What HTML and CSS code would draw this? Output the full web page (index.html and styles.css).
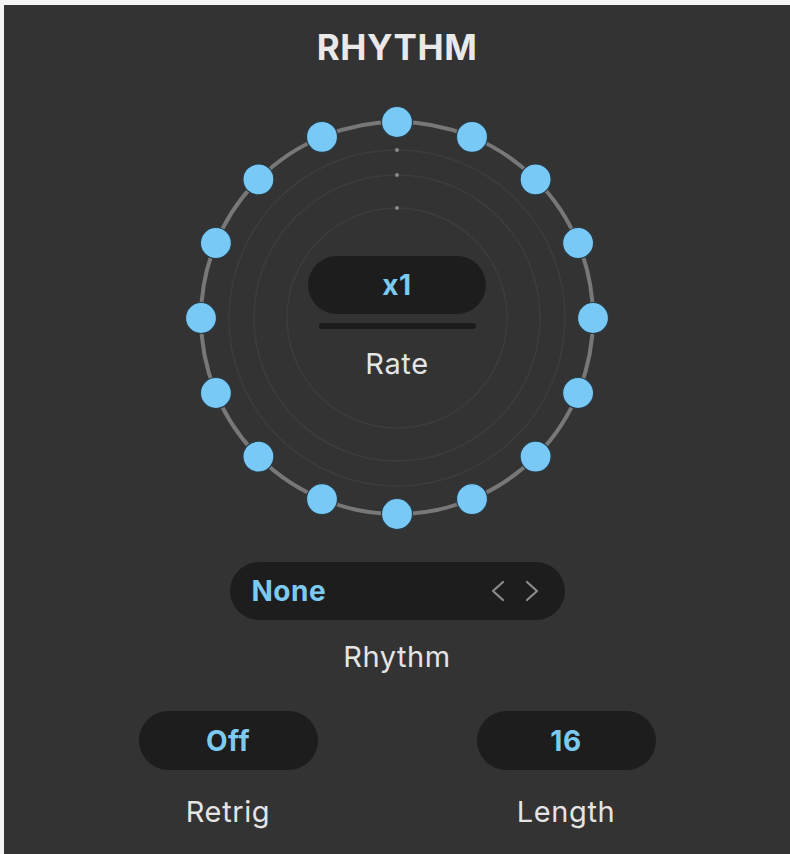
FILE: index.html
```html
<!DOCTYPE html>
<html>
<head>
<meta charset="utf-8">
<link rel="stylesheet" href="styles.css">
</head>
<body>
<div class="panel">
  <h1 class="title">RHYTHM</h1>
  <div class="dial">
    <svg class="dial-svg" width="440" height="440" viewBox="0 0 440 440">
      <circle cx="220" cy="220" r="168" fill="none" stroke="#3d3d3d" stroke-width="1.5"/>
      <circle cx="220" cy="220" r="143" fill="none" stroke="#3d3d3d" stroke-width="1.5"/>
      <circle cx="220" cy="220" r="110" fill="none" stroke="#3d3d3d" stroke-width="1.5"/>
      <circle cx="220" cy="52" r="2" fill="#8a8a8a"/>
      <circle cx="220" cy="77" r="2" fill="#8a8a8a"/>
      <circle cx="220" cy="110" r="2" fill="#8a8a8a"/>
      <circle cx="220" cy="220" r="196" fill="none" stroke="#787878" stroke-width="4"/>
      <g fill="#78c9f6" stroke="#2a3a44" stroke-width="1.2">
        <circle cx="220" cy="24" r="15.5"/>
        <circle cx="295" cy="38.9" r="15.5"/>
        <circle cx="358.6" cy="81.4" r="15.5"/>
        <circle cx="401.1" cy="145" r="15.5"/>
        <circle cx="416" cy="220" r="15.5"/>
        <circle cx="401.1" cy="295" r="15.5"/>
        <circle cx="358.6" cy="358.6" r="15.5"/>
        <circle cx="295" cy="401.1" r="15.5"/>
        <circle cx="220" cy="416" r="15.5"/>
        <circle cx="145" cy="401.1" r="15.5"/>
        <circle cx="81.4" cy="358.6" r="15.5"/>
        <circle cx="38.9" cy="295" r="15.5"/>
        <circle cx="24" cy="220" r="15.5"/>
        <circle cx="38.9" cy="145" r="15.5"/>
        <circle cx="81.4" cy="81.4" r="15.5"/>
        <circle cx="145" cy="38.9" r="15.5"/>
      </g>
    </svg>
    <div class="rate">
      <div class="pill rate-pill"><span class="value">x1</span></div>
      <div class="rate-bar"></div>
      <div class="label">Rate</div>
    </div>
  </div>

  <div class="pill rhythm-pill">
    <span class="value">None</span>
    <svg class="chevrons" width="54" height="22" viewBox="0 0 54 22">
      <polyline points="14,2 4,11 14,20" fill="none" stroke="#8c8c8c" stroke-width="2.2" stroke-linecap="round" stroke-linejoin="round"/>
      <polyline points="38,2 48,11 38,20" fill="none" stroke="#8c8c8c" stroke-width="2.2" stroke-linecap="round" stroke-linejoin="round"/>
    </svg>
  </div>
  <div class="label rhythm-label">Rhythm</div>

  <div class="bottom-row">
    <div class="control">
      <div class="pill small-pill"><span class="value">Off</span></div>
      <div class="label control-label">Retrig</div>
    </div>
    <div class="control">
      <div class="pill small-pill"><span class="value">16</span></div>
      <div class="label control-label">Length</div>
    </div>
  </div>
</div>
</body>
</html>
```
FILE: styles.css
```css
html, body {
  margin: 0;
  padding: 0;
  background: #f4f4f4;
}

body {
  font-family: Inter, "Noto Sans", "Liberation Sans", sans-serif;
}

.panel {
  margin: 5px 0 0 4px;
  width: 786px;
  height: 849px;
  background: #333333;
  display: flex;
  flex-direction: column;
  align-items: center;
  box-sizing: border-box;
  padding-top: 21px;
}

.title {
  margin: 0;
  font-size: 35px;
  line-height: 42px;
  font-weight: 700;
  color: #e9e9e9;
  letter-spacing: 0.6px;
}

.dial {
  margin-top: 30px;
  display: grid;
  width: 440px;
  height: 440px;
}

.dial-svg {
  grid-area: 1 / 1;
  display: block;
}

.rate {
  grid-area: 1 / 1;
  justify-self: center;
  align-self: start;
  margin-top: 158px;
  display: flex;
  flex-direction: column;
  align-items: center;
}

.pill {
  background: #1d1d1d;
  border-radius: 30px;
  display: flex;
  align-items: center;
  box-sizing: border-box;
}

.value {
  color: #7ccaf2;
  font-weight: 700;
  font-size: 28px;
  line-height: 30px;
  letter-spacing: 0.5px;
}

.rate-pill {
  width: 178px;
  height: 58px;
  justify-content: center;
}

.rate-bar {
  margin-top: 9px;
  width: 157px;
  height: 6px;
  border-radius: 3px;
  background: #1b1b1b;
}

.label {
  color: #e4e4e4;
  font-size: 29px;
  line-height: 30px;
  font-weight: 400;
  letter-spacing: 0.6px;
}

.rate .label {
  margin-top: 20px;
}

.rhythm-pill {
  margin-top: 24px;
  width: 335px;
  height: 58px;
  padding: 0 22px 0 22px;
  justify-content: space-between;
}

.chevrons {
  display: block;
}

.rhythm-label {
  margin-top: 22px;
}

.bottom-row {
  margin-top: 39px;
  display: flex;
  gap: 159px;
}

.control {
  width: 179px;
  display: flex;
  flex-direction: column;
  align-items: center;
}

.small-pill {
  width: 179px;
  height: 59px;
  justify-content: center;
}

.control-label {
  margin-top: 27px;
}
```
